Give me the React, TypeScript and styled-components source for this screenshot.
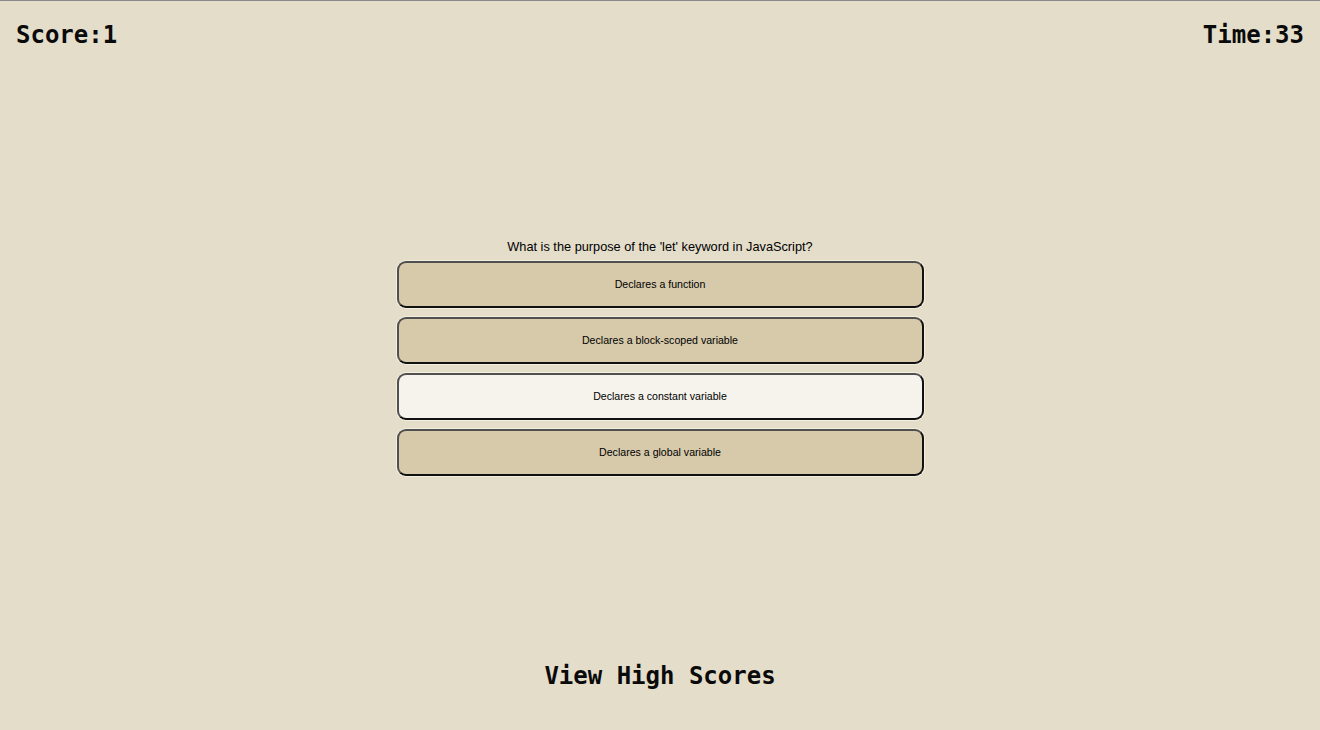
import React from "react";
import styled, { createGlobalStyle } from "styled-components";

const Global = createGlobalStyle`
  html, body { margin: 0; padding: 0; }
  body {
    background: #e4ddca;
    font-family: "Liberation Sans", Arial, sans-serif;
  }
`;

const Page = styled.div`
  height: 730px;
  box-sizing: border-box;
  border-top: 1px solid #8a8a8a;
  display: flex;
  flex-direction: column;
  background: #e4ddca;
`;

const Header = styled.header`
  display: flex;
  justify-content: space-between;
  padding: 20px 16px 0 16px;
`;

const Stat = styled.div`
  font-family: "DejaVu Sans Mono", "Liberation Mono", monospace;
  font-weight: bold;
  font-size: 24px;
  line-height: 28px;
  color: #0a0a0a;
`;

const Quiz = styled.main`
  margin-top: 190px;
  display: flex;
  flex-direction: column;
  align-items: center;
`;

const Question = styled.p`
  margin: 0 0 7px 0;
  font-size: 12.75px;
  line-height: 15px;
  color: #000;
`;

const Choices = styled.div`
  display: flex;
  flex-direction: column;
  gap: 9.5px;
  width: 527px;
`;

const Choice = styled.button<{ $selected?: boolean }>`
  height: 46.5px;
  width: 100%;
  box-sizing: border-box;
  border: 2px solid #111;
  border-top-color: #505050;
  border-left-color: #505050;
  border-radius: 9px;
  background: ${(p) => (p.$selected ? "#f6f3ec" : "#d6caab")};
  box-shadow: 0 0 0 1px rgba(255, 250, 235, 0.6);
  font-family: "Liberation Sans", Arial, sans-serif;
  font-size: 10.6px;
  color: #000;
  cursor: pointer;
  padding: 0;
`;

const Footer = styled.footer`
  margin-top: auto;
  padding-bottom: 40px;
  display: flex;
  justify-content: center;
`;

const HighScores = styled.a`
  font-family: "DejaVu Sans Mono", "Liberation Mono", monospace;
  font-weight: bold;
  font-size: 24px;
  line-height: 28px;
  color: #0a0a0a;
  text-decoration: none;
  cursor: pointer;
`;

const choices = [
  "Declares a function",
  "Declares a block-scoped variable",
  "Declares a constant variable",
  "Declares a global variable",
];

export default function App() {
  return (
    <>
      <Global />
      <Page>
        <Header>
          <Stat>Score:1</Stat>
          <Stat>Time:33</Stat>
        </Header>
        <Quiz>
          <Question>What is the purpose of the 'let' keyword in JavaScript?</Question>
          <Choices>
            {choices.map((c, i) => (
              <Choice key={c} $selected={i === 2}>
                {c}
              </Choice>
            ))}
          </Choices>
        </Quiz>
        <Footer>
          <HighScores>View High Scores</HighScores>
        </Footer>
      </Page>
    </>
  );
}
